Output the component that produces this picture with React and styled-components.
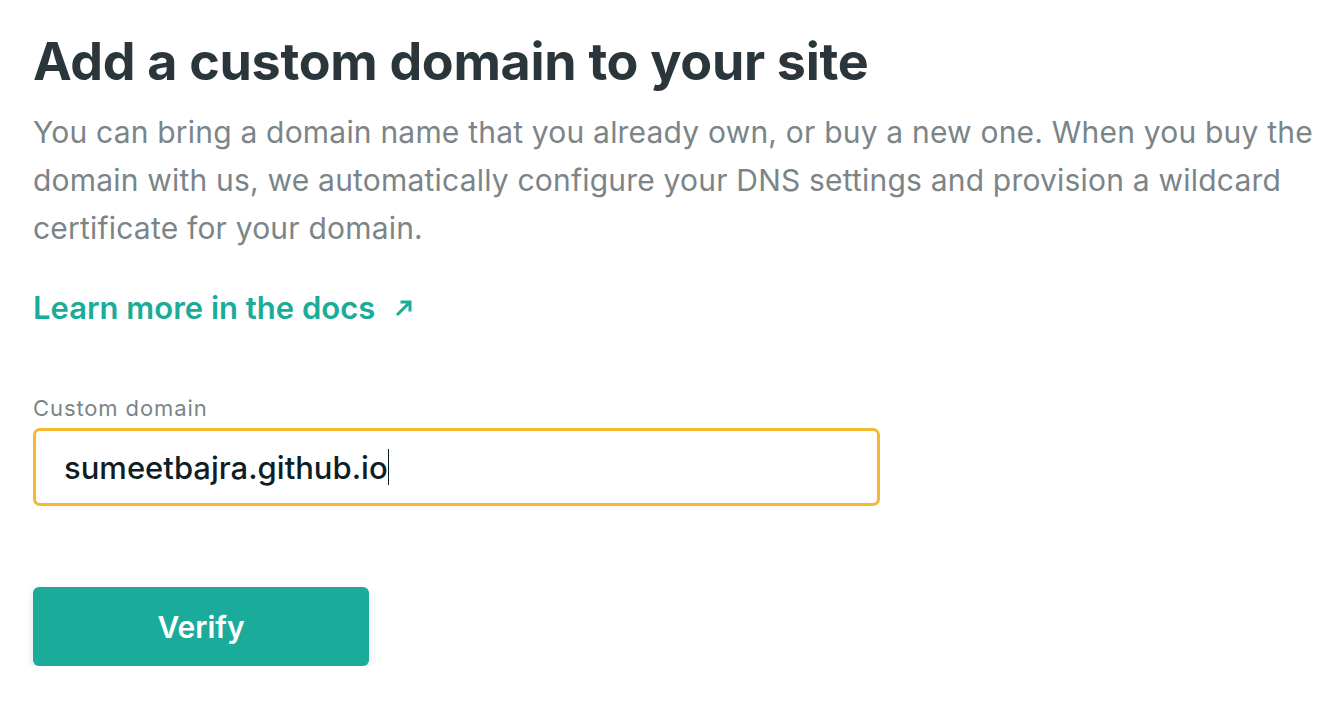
import React from 'react'
import styled, { createGlobalStyle } from 'styled-components'

const GlobalStyle = createGlobalStyle`
  html, body {
    margin: 0;
    padding: 0;
    background: #fff;
  }
  body {
    font-family: Inter, "Noto Sans", sans-serif;
    -webkit-font-smoothing: antialiased;
  }
`

const ArrowIcon = () => (
  <svg width="20" height="20" viewBox="0 0 20 20" fill="none">
    <path
      d="M3 17L16 4M6.5 4H16V13.5"
      stroke="currentColor"
      strokeWidth="3"
      strokeLinecap="butt"
    />
  </svg>
)

const App = () => (
  <>
    <GlobalStyle />
    <Page>
      <Title>Add a custom domain to your site</Title>
      <Intro>
        You can bring a domain name that you already own, or buy a new one. When you buy the
        domain with us, we automatically configure your DNS settings and provision a wildcard
        certificate for your domain.
      </Intro>
      <DocsLink href="#">
        Learn more in the docs
        <ArrowIcon />
      </DocsLink>
      <Field>
        <Label htmlFor="domain">Custom domain</Label>
        <InputBox>
          <Value>sumeetbajra.github.io</Value>
          <Caret />
        </InputBox>
      </Field>
      <VerifyButton>Verify</VerifyButton>
    </Page>
  </>
)

const Page = styled.main`
  display: flex;
  flex-direction: column;
  align-items: flex-start;
  padding: 30px 0 0 33px;
`

const Title = styled.h1`
  margin: 0;
  font-size: 52px;
  line-height: 64px;
  font-weight: 700;
  color: #2b363c;
  letter-spacing: -0.3px;
`

const Intro = styled.p`
  margin: 14px 0 0;
  width: 1300px;
  font-size: 30px;
  line-height: 48px;
  letter-spacing: 0.2px;
  color: #7b8588;
`

const DocsLink = styled.a`
  display: flex;
  align-items: center;
  gap: 19px;
  margin-top: 36px;
  font-size: 31px;
  line-height: 40px;
  font-weight: 600;
  color: #1aab9b;
  text-decoration: none;
`

const Field = styled.div`
  display: flex;
  flex-direction: column;
  margin-top: 65px;
`

const Label = styled.label`
  font-size: 22px;
  line-height: 30px;
  letter-spacing: 0.9px;
  color: #7b8588;
  margin-bottom: 5px;
`

const InputBox = styled.div`
  box-sizing: border-box;
  display: flex;
  align-items: center;
  width: 847px;
  height: 78px;
  padding: 0 28px;
  border: 3px solid #f4b92f;
  border-radius: 7px;
`

const Value = styled.span`
  font-size: 31px;
  color: #0e1e25;
  font-weight: 500;
`

const Caret = styled.span`
  width: 1.5px;
  height: 36px;
  background: #0e1e25;
`

const VerifyButton = styled.button`
  margin-top: 81px;
  width: 336px;
  height: 79px;
  border: none;
  border-radius: 6px;
  background: #1aab9b;
  color: #fff;
  font-family: Inter, sans-serif;
  font-size: 30px;
  font-weight: 600;
  box-shadow: 0 3px 8px rgba(0, 0, 0, 0.12);
`

export default App
